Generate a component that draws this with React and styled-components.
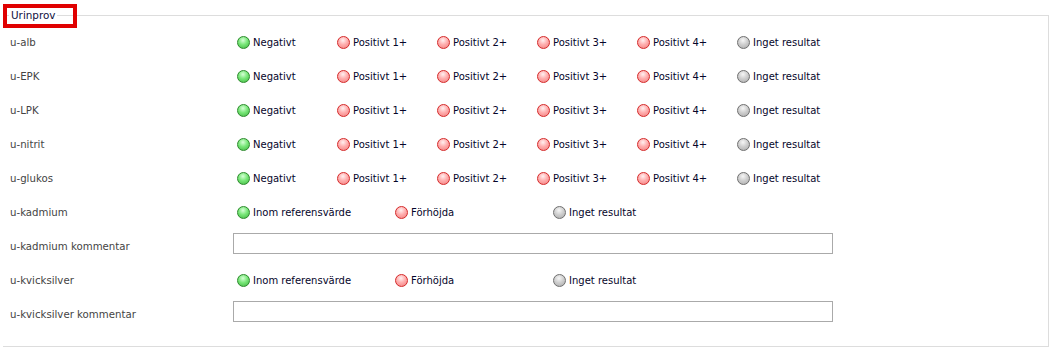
import React from "react";
import styled, { createGlobalStyle } from "styled-components";

const GlobalStyle = createGlobalStyle`
  html, body {
    margin: 0;
    padding: 0;
    background: #fff;
  }
  body {
    font-family: "DejaVu Sans", Verdana, sans-serif;
    font-size: 10px;
  }
`;

const Page = styled.div`
  position: relative;
  width: 1049px;
  height: 349px;
  padding: 9px 0 0 3px;
  box-sizing: border-box;
  overflow: hidden;
`;

const Box = styled.fieldset`
  margin: 0;
  width: 1046px;
  height: 338px;
  box-sizing: border-box;
  padding: 4px 0 0 6px;
  border: 1px solid #dddddd;
  border-left: none;
`;

const Legend = styled.legend`
  padding: 0 1px 0 2px;
  line-height: 12px;
  font-size: 10.4px;
  color: #0e0e40;
`;

const Marker = styled.div`
  position: absolute;
  left: 3px;
  top: 4px;
  width: 74px;
  height: 24px;
  box-sizing: border-box;
  border: 4px solid #e00000;
  pointer-events: none;
`;

const Row = styled.div`
  display: flex;
  align-items: center;
  height: 34px;
`;

const Label = styled.div`
  width: 224px;
  flex: none;
  padding-left: 1px;
  box-sizing: border-box;
  color: #444444;
  font-size: 10.2px;
`;

const Options = styled.div`
  display: flex;
  align-items: center;
`;

const Option = styled.label`
  display: flex;
  align-items: center;
  gap: 3px;
  width: ${p => p.$width}px;
  padding-left: 4px;
  box-sizing: border-box;
  color: #05052a;
  white-space: nowrap;
`;

const dotColors = {
  green: { light: "#d6ffd6", mid: "#79e779", dark: "#3fb53f", edge: "#2c8a2c" },
  red: { light: "#fff0f0", mid: "#ffaeae", dark: "#f07c7c", edge: "#d42a2a" },
  gray: { light: "#f6f6f6", mid: "#cfcfcf", dark: "#a9a9a9", edge: "#6f6f6f" },
};

const Dot = styled.span`
  width: 13px;
  height: 13px;
  flex: none;
  border-radius: 50%;
  box-sizing: border-box;
  border: 1px solid ${p => dotColors[p.$tone].edge};
  background: radial-gradient(
    circle at 45% 30%,
    ${p => dotColors[p.$tone].light} 0%,
    ${p => dotColors[p.$tone].mid} 45%,
    ${p => dotColors[p.$tone].dark} 100%
  );
`;

const Comment = styled.input`
  width: 600px;
  height: 21px;
  margin: 0 0 6px 0;
  padding: 0 3px;
  box-sizing: border-box;
  border: 1px solid #aaaaaa;
  background: #fff;
  font-family: inherit;
  font-size: 10px;
  outline: none;
`;

const scale = [
  ["green", "Negativt"],
  ["red", "Positivt 1+"],
  ["red", "Positivt 2+"],
  ["red", "Positivt 3+"],
  ["red", "Positivt 4+"],
  ["gray", "Inget resultat"],
];

const reference = [
  ["green", "Inom referensvärde"],
  ["red", "Förhöjda"],
  ["gray", "Inget resultat"],
];

const rows = [
  { label: "u-alb", options: scale, width: 100 },
  { label: "u-EPK", options: scale, width: 100 },
  { label: "u-LPK", options: scale, width: 100 },
  { label: "u-nitrit", options: scale, width: 100 },
  { label: "u-glukos", options: scale, width: 100 },
  { label: "u-kadmium", options: reference, width: 158 },
  { label: "u-kadmium kommentar", input: true },
  { label: "u-kvicksilver", options: reference, width: 158 },
  { label: "u-kvicksilver kommentar", input: true },
];

const App = () => {
  return (
    <Page>
      <GlobalStyle />
      <Box>
        <Legend>Urinprov</Legend>
        {rows.map(row => (
          <Row key={row.label}>
            <Label>{row.label}</Label>
            {row.input ? (
              <Comment type="text" />
            ) : (
              <Options>
                {row.options.map(([tone, text]) => (
                  <Option key={text} $width={row.width}>
                    <Dot $tone={tone} />
                    {text}
                  </Option>
                ))}
              </Options>
            )}
          </Row>
        ))}
      </Box>
      <Marker />
    </Page>
  );
};

export default App;
